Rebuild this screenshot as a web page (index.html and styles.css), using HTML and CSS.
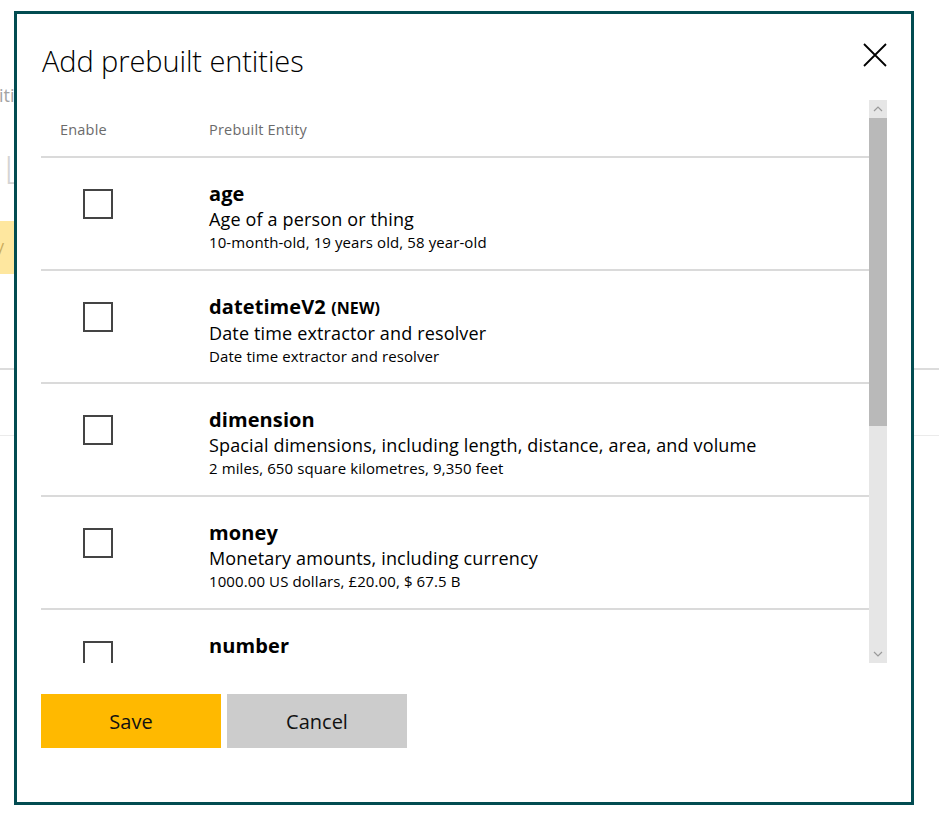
FILE: index.html
```html
<!DOCTYPE html>
<html lang="en">
<head>
<meta charset="utf-8">
<title>Add prebuilt entities</title>
<link rel="stylesheet" href="styles.css">
</head>
<body>
<div class="page">
  <div class="bg-heading">ities</div>
  <div class="bg-input">L</div>
  <div class="bg-button">y</div>
  <div class="bg-rule bg-rule-a"></div>
  <div class="bg-rule bg-rule-b"></div>
</div>

<div class="modal" role="dialog" aria-label="Add prebuilt entities">
  <div class="modal-head">
    <h1 class="modal-title">Add prebuilt entities</h1>
    <button class="close-btn" aria-label="Close">
      <svg width="24" height="24" viewBox="0 0 24 24"><path d="M1 1 L23 23 M23 1 L1 23" stroke="#000" stroke-width="1.8" fill="none"/></svg>
    </button>
  </div>

  <div class="table-wrap">
    <div class="table">
      <div class="thead">
        <div class="col-enable th">Enable</div>
        <div class="col-entity th">Prebuilt Entity</div>
      </div>
      <div class="row">
        <div class="col-enable"><span class="checkbox"></span></div>
        <div class="col-entity">
          <div class="name">age</div>
          <div class="desc">Age of a person or thing</div>
          <div class="example">10-month-old, 19 years old, 58 year-old</div>
        </div>
      </div>
      <div class="row">
        <div class="col-enable"><span class="checkbox"></span></div>
        <div class="col-entity">
          <div class="name">datetimeV2 <span class="new">(NEW)</span></div>
          <div class="desc">Date time extractor and resolver</div>
          <div class="example">Date time extractor and resolver</div>
        </div>
      </div>
      <div class="row">
        <div class="col-enable"><span class="checkbox"></span></div>
        <div class="col-entity">
          <div class="name">dimension</div>
          <div class="desc">Spacial dimensions, including length, distance, area, and volume</div>
          <div class="example">2 miles, 650 square kilometres, 9,350 feet</div>
        </div>
      </div>
      <div class="row">
        <div class="col-enable"><span class="checkbox"></span></div>
        <div class="col-entity">
          <div class="name">money</div>
          <div class="desc">Monetary amounts, including currency</div>
          <div class="example">1000.00 US dollars, £20.00, $ 67.5 B</div>
        </div>
      </div>
      <div class="row">
        <div class="col-enable"><span class="checkbox"></span></div>
        <div class="col-entity">
          <div class="name">number</div>
        </div>
      </div>
    </div>
    <div class="scrollbar">
      <div class="sb-btn">
        <svg width="10" height="6" viewBox="0 0 10 6"><path d="M1 5 L5 1 L9 5" stroke="#9a9a9a" stroke-width="1.2" fill="none"/></svg>
      </div>
      <div class="sb-thumb"></div>
      <div class="sb-track"></div>
      <div class="sb-btn">
        <svg width="10" height="6" viewBox="0 0 10 6"><path d="M1 1 L5 5 L9 1" stroke="#9a9a9a" stroke-width="1.2" fill="none"/></svg>
      </div>
    </div>
  </div>

  <div class="actions">
    <button class="btn btn-save">Save</button>
    <button class="btn btn-cancel">Cancel</button>
  </div>
</div>
</body>
</html>
```
FILE: styles.css
```css
html, body {
  margin: 0;
  padding: 0;
  background: #fff;
}
body {
  font-family: "Open Sans", "Noto Sans", sans-serif;
  color: #000;
  width: 939px;
  height: 823px;
  overflow: hidden;
  position: relative;
}

/* background page (under the dialog) */
.page {
  padding-top: 83px;
}
.bg-heading {
  font-size: 18px;
  line-height: 24px;
  color: #a3a3a3;
  margin-left: -1px;
}
.bg-input {
  margin-top: 40px;
  margin-left: 4px;
  font-size: 38px;
  font-weight: 300;
  line-height: 44px;
  color: #d4d4d4;
}
.bg-button {
  margin-top: 30px;
  width: 140px;
  height: 53px;
  background: #fee79f;
  color: #c9ab5c;
  font-size: 16px;
  line-height: 50px;
  text-indent: -4px;
}
.bg-rule {
  width: 100%;
}
.bg-rule-a {
  margin-top: 94px;
  border-top: 2px solid #dcdcdc;
}
.bg-rule-b {
  margin-top: 65px;
  border-top: 1px solid #ebebeb;
}

/* dialog */
.modal {
  position: absolute;
  left: 14px;
  top: 11px;
  width: 900px;
  height: 794px;
  box-sizing: border-box;
  border: 3px solid #024c51;
  background: #fff;
  display: flex;
  flex-direction: column;
  padding: 0 24px;
}
.modal-head {
  height: 86px;
  display: flex;
  justify-content: space-between;
  align-items: flex-start;
}
.modal-title {
  margin: 29px 0 0 1px;
  font-size: 29px;
  line-height: 36px;
  font-weight: 300;
  letter-spacing: -0.1px;
  color: #000;
}
.close-btn {
  margin-top: 29px;
  margin-right: 0;
  padding: 0;
  border: 0;
  background: none;
  width: 24px;
  height: 24px;
  cursor: pointer;
}
.close-btn svg { display: block; }

.table-wrap {
  display: flex;
  height: 563px;
}
.table {
  flex: 1;
  overflow: hidden;
}
.thead {
  display: flex;
  height: 56px;
  align-items: center;
  border-bottom: 2px solid #dadada;
}
.th {
  font-size: 14.5px;
  letter-spacing: 0.2px;
  color: #6b6b6b;
  padding-top: 2px;
}
.thead .col-enable { padding-left: 19px; }
.col-enable {
  width: 168px;
  flex: none;
  box-sizing: border-box;
}
.col-entity { flex: 1; }

.row {
  display: flex;
  height: 111px;
  border-bottom: 2px solid #dadada;
  box-sizing: content-box;
}
.row .col-enable { padding: 31px 0 0 42px; }
.checkbox {
  display: block;
  width: 30px;
  height: 30px;
  box-sizing: border-box;
  border: 2px solid #444;
}
.row .col-entity { padding-top: 23px; }
.name {
  font-size: 20px;
  line-height: 26px;
  font-weight: 700;
  letter-spacing: 0.1px;
}
.new {
  font-size: 16px;
}
.desc {
  font-size: 18px;
  line-height: 25px;
  letter-spacing: 0.15px;
}
.example {
  font-size: 15px;
  line-height: 20px;
  letter-spacing: 0.1px;
}

.scrollbar {
  width: 18px;
  flex: none;
  display: flex;
  flex-direction: column;
  background: #e6e6e6;
}
.sb-btn {
  height: 18px;
  display: flex;
  align-items: center;
  justify-content: center;
}
.sb-thumb {
  height: 308px;
  background: #b9b9b9;
}
.sb-track { flex: 1; }

.actions {
  display: flex;
  gap: 6px;
  margin-top: 31px;
}
.btn {
  width: 180px;
  height: 54px;
  border: 0;
  font-family: inherit;
  font-size: 20px;
  color: #111;
  padding: 0;
}
.btn-save { background: #ffb900; }
.btn-cancel { background: #cccccc; }
```
